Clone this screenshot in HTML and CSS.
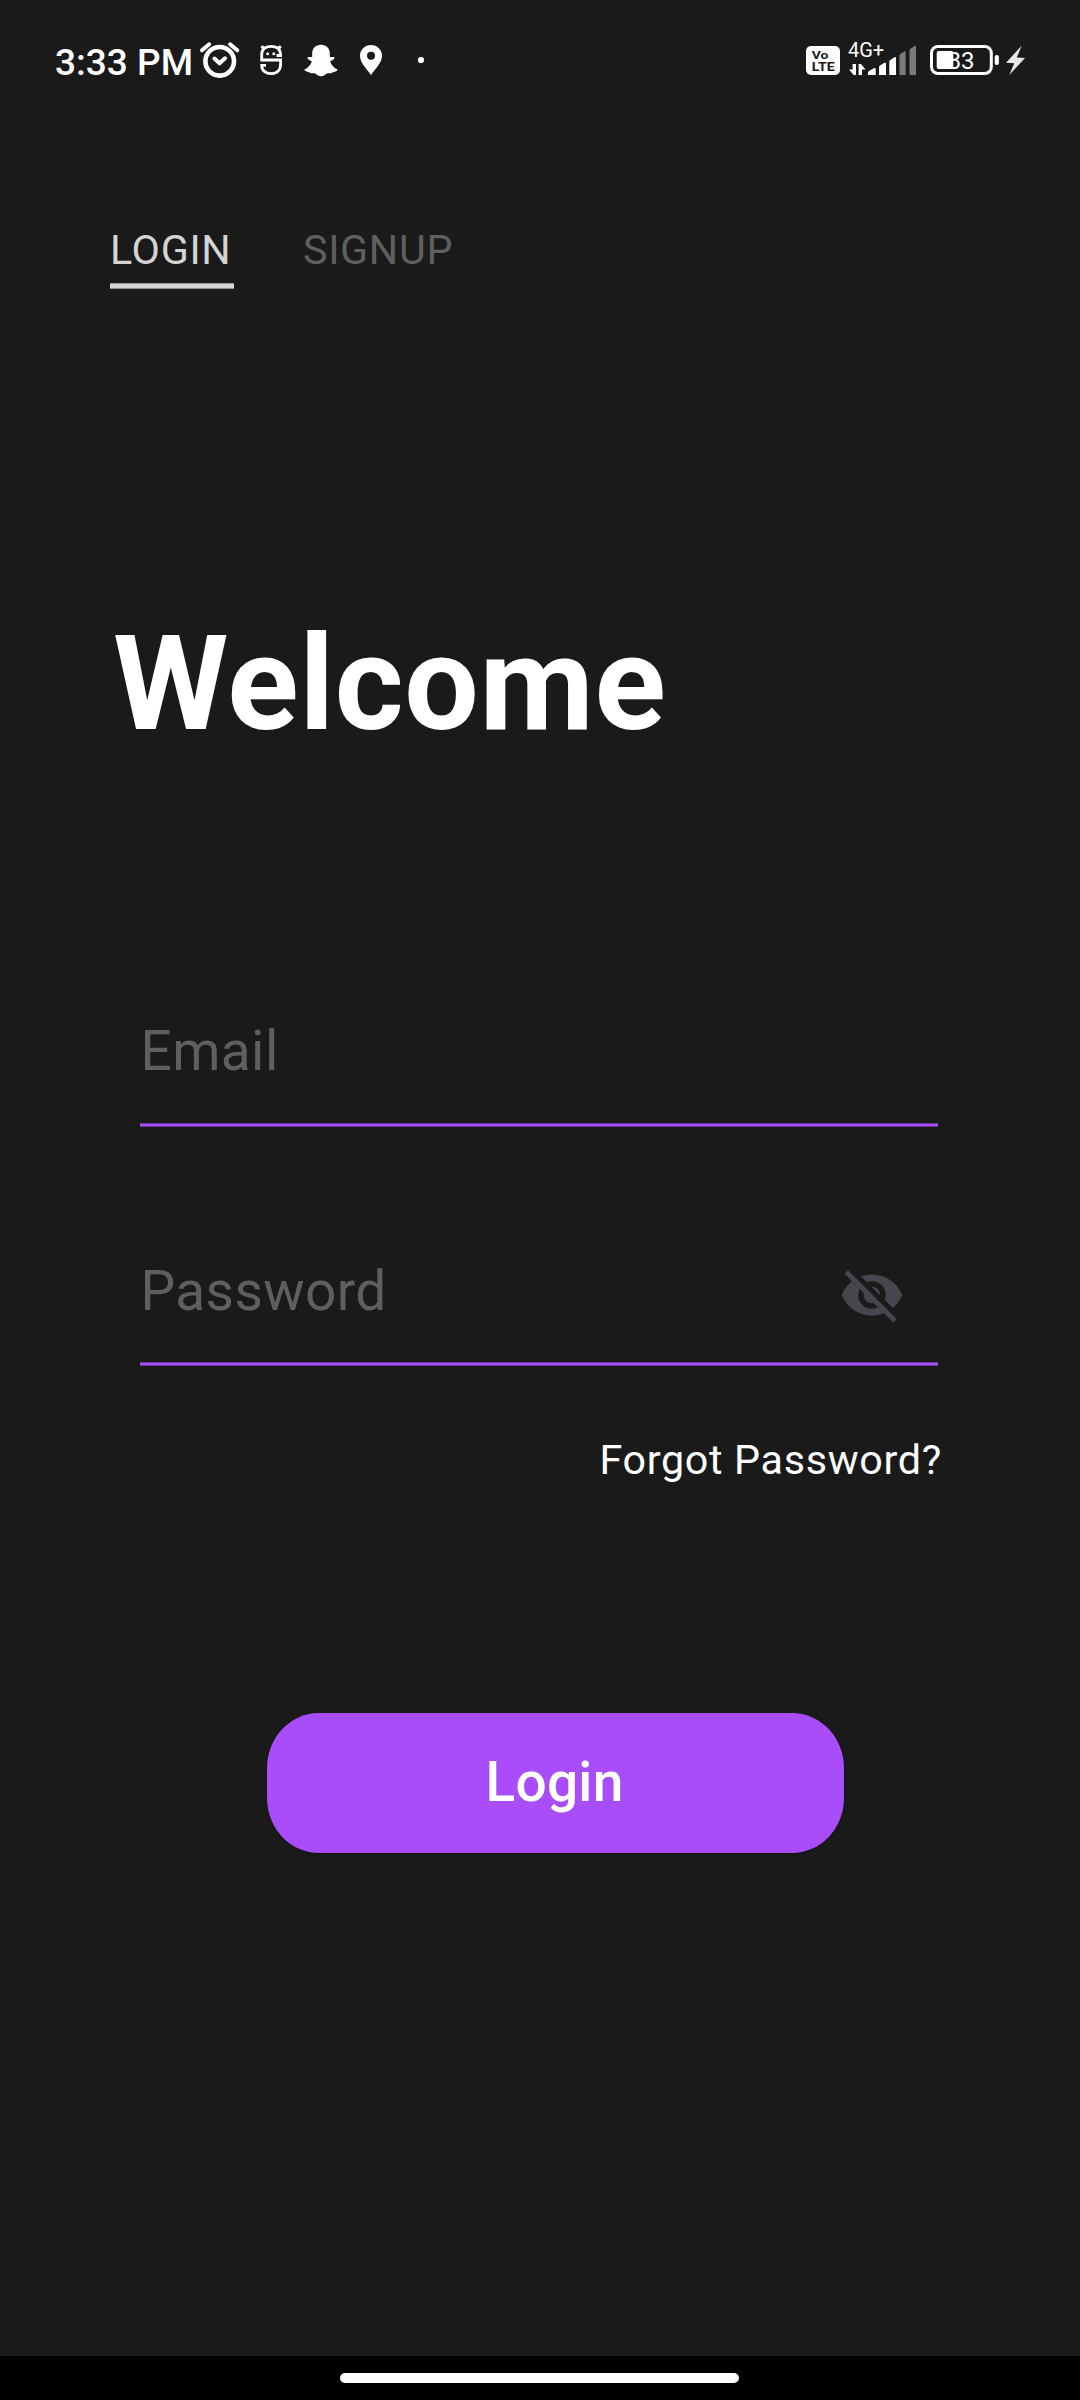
FILE: index.html
```html
<!DOCTYPE html>
<html lang="en">
<head>
<meta charset="utf-8">
<title>Login</title>
<link rel="stylesheet" href="styles.css">
</head>
<body>
<div class="screen">
  <header class="status">
    <div class="status-left">
      <span class="time">3:33 PM</span>
      <svg class="glyph" width="44" height="40" viewBox="198 40 44 40" fill="none" stroke="#fff" stroke-linecap="round">
        <circle cx="219.7" cy="61.3" r="14.3" stroke-width="4.6"/>
        <path d="M202 50.3l7.200-6M237.300 50.300l-7.200-6" stroke-width="4"/>
        <path d="M214.400 58.600l5.200 4.700 5.400-5" stroke-width="4" stroke-linejoin="round"/>
      </svg>
      <svg class="glyph" width="30" height="40" viewBox="256 40 30 40" fill="none" stroke="#fff" stroke-width="2.8">
        <path d="M276.500 55.500h4V55c0-6-4-8.600-9.500-8.600S261.700 49 261.700 55v5h18.900v4c0 6.500-4 9.700-9.500 9.700s-9.300-3.200-9.400-8.300h4.300"/>
        <g fill="#fff" stroke="none"><circle cx="267.600" cy="53.800" r="1.500"/><circle cx="273.800" cy="53.800" r="1.500"/><circle cx="262.600" cy="47.300" r="1.800"/><circle cx="279.600" cy="47.300" r="1.800"/></g>
      </svg>
      <svg class="glyph" width="42" height="40" viewBox="300 40 42 40" fill="#fff">
        <path d="M321 44.800c5.500 0 8.800 3.800 8.800 8.500v3.600c1.500.7 3.300-.6 4.600.6.8 1.600-3.200 2.900-4.200 4 1 3.600 4 6.700 7.500 7.900-.7 2-3.200 2.500-5.500 3-.9 1.800-2.800.4-5.200 1-2 .8-3 2.800-6 2.800s-4-2-6-2.800c-2.400-.6-4.300.8-5.200-1-2.300-.5-4.800-1-5.500-3 3.500-1.200 6.500-4.300 7.500-7.900-1-1.100-5-2.400-4.200-4 1.300-1.200 3.100.1 4.600-.6v-3.600c0-4.700 3.300-8.500 8.800-8.500z"/>
      </svg>
      <svg class="glyph" width="30" height="40" viewBox="356 40 30 40" fill="#fff" fill-rule="evenodd">
        <path d="M371 45c6.200 0 11 4.800 11 10.800C382 63 375 69 371 75.200 367 69 360 63 360 55.800 360 49.800 364.800 45 371 45zM371 51.800a4 4 0 1 0 0 8 4 4 0 0 0 0-8z"/>
      </svg>
      <svg class="glyph dot" width="12" height="40" viewBox="415 40 12 40" fill="#fff"><circle cx="421" cy="60" r="3.100"/></svg>
    </div>
    <svg class="status-right" width="222" height="50" viewBox="804 30 222 50" fill="#fff">
      <rect x="806" y="46" width="34" height="29" rx="5"/>
      <g class="volte"><text x="811.800" y="58.800" font-size="11.500" textLength="16.600" lengthAdjust="spacingAndGlyphs">Vo</text><text x="811.800" y="71.400" font-size="13" textLength="23" lengthAdjust="spacingAndGlyphs">LTE</text></g>
      <text class="net" x="848" y="56.700">4G+</text>
      <path d="M856 64v11h-2.400l-4.600-5.500h3.600V64zM858.600 75V64h2.400l4.600 5.500H862V75z"/>
      <path d="M868 75v-2.500q0-1 1-1.600l5.200-2.800q1.500-.5 1.500.8V75zM879 75v-7.800q0-1 1-1.600l4.500-2.800q1.500-.5 1.500.8V75zM889.300 75V62q0-1.200 1-1.900l4.200-2.900q1.500-.7 1.500.9V75z"/>
      <path fill="#7a7a7a" d="M899.500 75V55.700q0-1 1-1.700l3.700-2.500q1.500-.6 1.500.7V75zM909.500 75V50.500q0-1 1-1.700l4-2.800q1.500-.7 1.500.7V75z"/>
      <rect x="931.500" y="46.500" width="59.800" height="27" rx="6.500" fill="none" stroke="#fff" stroke-width="3"/>
      <rect x="936.700" y="51" width="16.600" height="18" rx="2"/>
      <text class="charge" x="947.500" y="69">83</text>
      <rect x="994.700" y="55" width="4.200" height="10" rx="2"/>
      <path fill="#e8e8e8" d="M1021.700 45.700L1006 62.700l8.300.6-5 11.700L1025 58l-8.300-.4z"/>
    </svg>
  </header>

  <nav class="tabs">
    <span class="tab active">LOGIN</span>
    <span class="tab">SIGNUP</span>
  </nav>

  <h1 class="title">Welcome</h1>

  <main class="form">
    <div class="field">
      <span class="hint">Email</span>
    </div>
    <div class="field password">
      <span class="hint">Password</span>
      <svg class="eye" width="66" height="66" viewBox="0 0 24 24">
        <clipPath id="cut"><path d="M2 4.270L19.730 22l2.540-2.540L4.540 1.730V1H23v22H1V4.270z"/></clipPath>
        <path clip-path="url(#cut)" fill="#49454f" d="M12 4.500C7 4.500 2.730 7.610 1 12c1.730 4.390 6 7.500 11 7.500s9.270-3.110 11-7.500c-1.730-4.390-6-7.500-11-7.500zM12 17c-2.760 0-5-2.240-5-5s2.240-5 5-5 5 2.240 5 5-2.240 5-5 5zM12 9c-1.660 0-3 1.340-3 3s1.340 3 3 3 3-1.340 3-3-1.340-3-3-3z"/>
        <path d="M3.270 4.270L19.740 20.740" stroke="#49454f" stroke-width="1.800" stroke-linecap="square"/>
      </svg>
    </div>
    <a class="forgot">Forgot Password?</a>
    <button class="submit" type="button">Login</button>
  </main>

  <footer class="navbar"><span class="pill"></span></footer>
</div>
</body>
</html>
```
FILE: styles.css
```css
* { box-sizing: border-box; }
body { margin: 0; background: #1a1a1a; font-family: Roboto, sans-serif; }
.screen { width: 1080px; height: 2400px; display: flex; flex-direction: column; background: #1a1a1a; color: #fff; overflow: hidden; }

.status { flex: none; height: 120px; padding: 30px 54px 0 55px; display: flex; justify-content: space-between; align-items: flex-start; }
.status svg { display: block; flex: none; }
.status-left { display: flex; align-items: flex-start; gap: 14px; padding-top: 10px; }
.time { width: 129px; margin-top: 1px; font-size: 37px; font-weight: 500; line-height: 43px; white-space: nowrap; }
.dot { margin-left: 15px; }
.volte { fill: #1a1a1a; font-weight: 700; }
.net { font-size: 20px; }
.charge { font-size: 24px; }

.tabs { flex: none; margin: 106px 0 0 110px; height: 63px; display: flex; gap: 69px; }
.tab { font-size: 41.25px; line-height: 48px; letter-spacing: .6875px; color: #5f5f5f; }
.tab.active { width: 124px; color: #d4d4d4; background: linear-gradient(#959595 1px, #d4d4d4 1px, #d4d4d4 5px, #959595 5px) bottom / 100% 6px no-repeat; }

.title { flex: none; margin: 318px 0 0 113px; font-size: 132px; font-weight: 700; line-height: 154px; letter-spacing: .6875px; }

.form { flex: 1; margin: 258px 142px 0 140px; display: flex; flex-direction: column; }
.field { height: 108px; display: flex; justify-content: space-between; background: linear-gradient(#66389a 1px, #a94dfb 1px, #a94dfb 3px, #66389a 3px) bottom / 100% 4px no-repeat; }
.password { height: 107px; margin-top: 132px; }
.hint { padding-left: .5px; font-size: 55px; line-height: 64px; letter-spacing: .4px; color: #5f5f5f; }
.eye { margin: 3px 33px 0 0; }
.forgot { align-self: flex-end; margin: 70px -4px 0 0; font-size: 41.25px; line-height: 48px; letter-spacing: .6875px; }
.submit { width: 577px; height: 140px; margin: 229px 0 0 126.500px; padding: 0 1px 2px 0; border: 0; border-radius: 52px / 55px; background: #a94dfb; color: #fff; font: 500 55px/64px Roboto, sans-serif; letter-spacing: .275px; box-shadow: 0 1px 3px rgba(0, 0, 0, .25); }

.navbar { flex: none; height: 44px; padding-right: 1px; background: #000; display: flex; align-items: center; justify-content: center; }
.pill { width: 399px; height: 10px; border-radius: 5px; background: #fff; }
```
